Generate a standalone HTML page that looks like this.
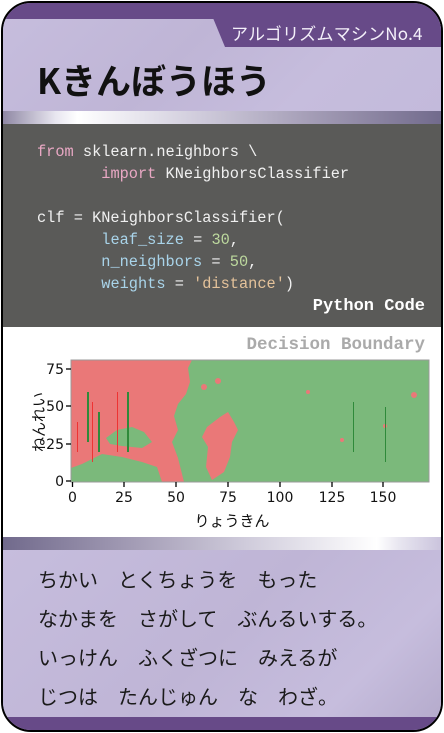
<!DOCTYPE html>
<html><head><meta charset="utf-8"><style>
*{margin:0;padding:0;box-sizing:border-box}
body{width:444px;height:733px;background:#fff;overflow:hidden;position:relative;font-family:"Liberation Sans","Noto Sans CJK JP",sans-serif}
.card{position:absolute;left:1px;top:1px;width:442px;height:731px;border:2.5px solid #000;border-radius:30px;overflow:hidden;background:#c5bcdb}
.abs{position:absolute}
.code{font-family:"Liberation Mono","DejaVu Sans Mono",monospace;font-size:15.3px;line-height:22px;color:#f0f0f0;white-space:pre}
.jp{font-family:"Noto Sans CJK JP","WenQuanYi Zen Hei",sans-serif}
</style></head><body>
<div class="card">
 <div class="abs" style="left:0;top:0;width:440px;height:16px;background:#674a88"></div>
 <div class="abs" style="left:0;top:16px;width:440px;height:92px;background:linear-gradient(135deg,#c6bddd 0%,#bfb5d6 40%,#c6bddd 70%,#c3badb 100%)"></div>
 <svg class="abs" style="left:0;top:0" width="440" height="50"><polygon points="210,15 440,15 440,44 222,44" fill="#674a88"/></svg>
 <div class="abs jp" style="left:228px;top:16px;font-size:17px;color:#f4f0fa;letter-spacing:0.2px;line-height:28px">アルゴリズムマシンNo.4</div>
 <div class="abs jp" style="left:34px;top:52px;font-size:35px;font-weight:bold;color:#111;line-height:50px">Kきんぼうほう</div>
 <div class="abs" style="left:0;top:108px;width:440px;height:13px;background:linear-gradient(90deg,#8f88a4 0%,#e8e6f0 12%,#ffffff 17%,#cfcbdb 45%,#a49db6 70%,#716a8c 100%)"></div>
 <div class="abs" style="left:0;top:121px;width:440px;height:203px;background:#5a5a58"></div>
 <div class="abs code" style="left:34px;top:138px"><span style="color:#e9a8c4">from</span> sklearn.neighbors \
       <span style="color:#e9a8c4">import</span> KNeighborsClassifier

clf = KNeighborsClassifier(
       <span style="color:#a9d4ea">leaf_size</span> = <span style="color:#bdd99e">30</span>,
       <span style="color:#a9d4ea">n_neighbors</span> = <span style="color:#bdd99e">50</span>,
       <span style="color:#a9d4ea">weights</span> = <span style="color:#e4c29a">'distance'</span>)</div>
 <div class="abs" style="left:280px;top:294px;width:142px;text-align:right;font-family:'Liberation Mono',monospace;font-weight:bold;font-size:17px;color:#fff">Python Code</div>
 <svg class="abs" style="left:-1px;top:-1px" width="442" height="540">
  <rect x="0" y="325" width="442" height="210" fill="#fff"/>
  <rect x="69" y="358" width="358" height="122" fill="#7bb97b"/>
  <path d="M69,358 H190 L186,366 L188,380 L184,392 L176,402 L172,414 L176,428 L170,440 L176,456 L180,472 L182,480 H160 L155,465 L140,460 L120,455 L100,452 L80,462 L69,466 Z" fill="#ea7878"/>
  <path d="M104,436 L115,428 L130,425 L142,430 L150,440 L140,446 L120,444 L108,442 Z" fill="#7bb97b"/>
  <path d="M205,425 L218,415 L226,410 L232,420 L236,428 L230,440 L228,455 L222,470 L210,478 L204,465 L206,445 L200,435 Z" fill="#ea7878"/>
  <g fill="#ea7878"><circle cx="216" cy="379" r="3"/><circle cx="202" cy="385" r="3"/><circle cx="412" cy="393" r="3"/><circle cx="306" cy="390" r="2"/><circle cx="383" cy="424" r="2"/><circle cx="340" cy="438" r="2"/></g>
  <g fill="#2f8a3a"><rect x="85" y="390" width="2" height="50"/><rect x="96" y="410" width="2" height="40"/><rect x="125" y="390" width="2" height="60"/><rect x="351" y="400" width="1" height="50"/><rect x="383" y="405" width="1" height="55"/></g>
  <g fill="#e33"><rect x="90" y="400" width="1" height="60"/><rect x="115" y="390" width="1" height="60"/><rect x="75" y="420" width="1" height="30"/></g>
  <rect x="69" y="358" width="358" height="122" fill="none" stroke="#999" stroke-width="1"/>
  <g stroke="#000" stroke-width="1.3"><line x1="70.5" y1="480" x2="70.5" y2="485"/><line x1="122" y1="480" x2="122" y2="485"/><line x1="174" y1="480" x2="174" y2="485"/><line x1="226" y1="480" x2="226" y2="485"/><line x1="278" y1="480" x2="278" y2="485"/><line x1="330" y1="480" x2="330" y2="485"/><line x1="381" y1="480" x2="381" y2="485"/>
  <line x1="64" y1="479" x2="69" y2="479"/><line x1="64" y1="442" x2="69" y2="442"/><line x1="64" y1="404" x2="69" y2="404"/><line x1="64" y1="367" x2="69" y2="367"/></g>
  <g font-family="DejaVu Sans,sans-serif" font-size="14" fill="#111" text-anchor="middle"><text x="70.5" y="500">0</text><text x="122" y="500">25</text><text x="174" y="500">50</text><text x="226" y="500">75</text><text x="278" y="500">100</text><text x="330" y="500">125</text><text x="381" y="500">150</text></g>
  <g font-family="DejaVu Sans,sans-serif" font-size="14" fill="#111" text-anchor="end"><text x="62" y="484">0</text><text x="62" y="447">25</text><text x="62" y="409">50</text><text x="62" y="372">75</text></g>
  <text x="230" y="524" text-anchor="middle" font-family="Noto Sans CJK JP,sans-serif" font-size="15" fill="#111">りょうきん</text>
  <text transform="translate(42,420) rotate(-90)" text-anchor="middle" font-family="Noto Sans CJK JP,sans-serif" font-size="15" fill="#111">ねんれい</text>
 </svg>
 <div class="abs" style="left:160px;top:332px;width:262px;text-align:right;font-family:'Liberation Mono',monospace;font-weight:bold;font-size:17.5px;color:#aaa">Decision Boundary</div>
 <div class="abs" style="left:0;top:534px;width:440px;height:13px;background:linear-gradient(90deg,#716a8c 0%,#a49db6 30%,#cfcbdb 55%,#ffffff 85%,#e8e6f0 90%,#c9c2dc 100%)"></div>
 <div class="abs" style="left:0;top:547px;width:440px;height:168px;background:linear-gradient(135deg,#c6bddd 0%,#bfb5d6 50%,#c6bddd 80%,#b5abcc 100%)"></div>
 <div class="abs jp" style="left:35px;top:556px;font-size:20px;line-height:39px;color:#1a1a1a;white-space:pre">ちかい　とくちょうを　もった
なかまを　さがして　ぶんるいする。
いっけん　ふくざつに　みえるが
じつは　たんじゅん　な　わざ。</div>
 <div class="abs" style="left:0;top:714px;width:440px;height:20px;background:#674a88"></div>
</div>
</body></html>
